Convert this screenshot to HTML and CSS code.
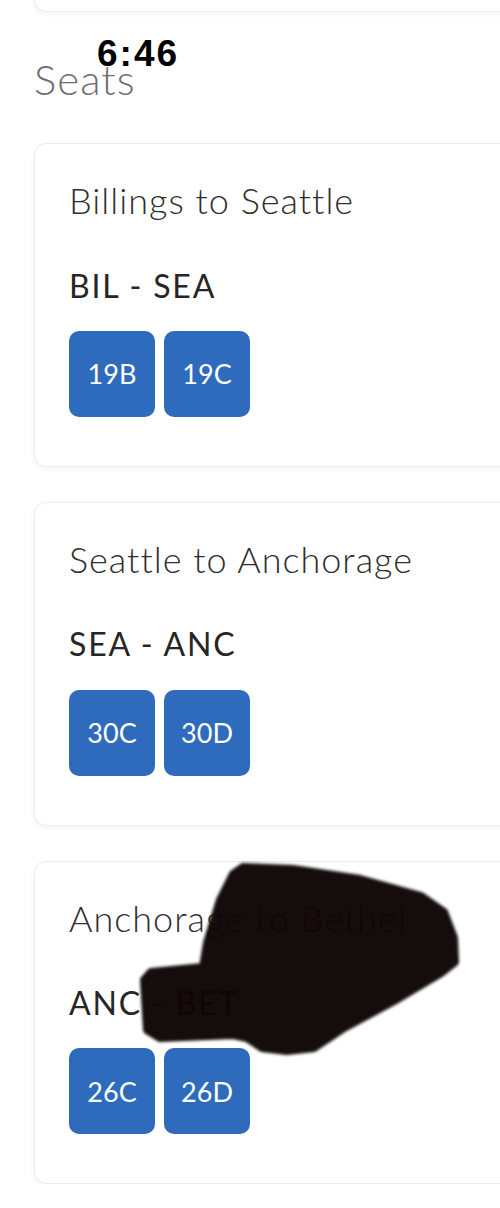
FILE: index.html
```html
<!DOCTYPE html>
<html lang="en">
<head>
<meta charset="utf-8">
<title>Seats</title>
<link rel="stylesheet" href="styles.css">
</head>
<body>
<div class="status-time">6:46</div>
<main class="page">
  <div class="card card-tail"></div>
  <h1 class="section-title">Seats</h1>
  <div class="card-list">
    <section class="card">
      <h2 class="leg-title">Billings to Seattle</h2>
      <p class="leg-code">BIL - SEA</p>
      <div class="seats">
        <button class="seat">19B</button>
        <button class="seat">19C</button>
      </div>
    </section>
    <section class="card">
      <h2 class="leg-title">Seattle to Anchorage</h2>
      <p class="leg-code">SEA - ANC</p>
      <div class="seats">
        <button class="seat">30C</button>
        <button class="seat">30D</button>
      </div>
    </section>
    <section class="card">
      <h2 class="leg-title">Anchorage to Bethel</h2>
      <p class="leg-code">ANC - BET</p>
      <div class="seats">
        <button class="seat">26C</button>
        <button class="seat">26D</button>
      </div>
    </section>
  </div>
</main>
<svg class="redaction" viewBox="0 0 500 1208" width="500" height="1208" aria-hidden="true">
  <path d="M243,867 L293,869 L360,879 L421,896 L444,912 L454,938 L455,962 L441,973 L394,1001 L344,1028 L314,1048 L287,1051 L262,1048 L247,1038 L233,1035 L160,1038 L147,1030 L144,980 L151,972 L203,967 L207,943 L220,900 L233,874 Z"/>
</svg>
</body>
</html>
```

FILE: styles.css
```css
html, body {
  margin: 0;
  padding: 0;
  background: #ffffff;
}

body {
  position: relative;
  overflow: hidden;
  font-family: Lato, "Open Sans", sans-serif;
}

.page {
  padding-left: 34px;
}

/* status bar clock, drawn over the page header */
.status-time {
  position: absolute;
  left: 97px;
  top: 32px;
  z-index: 2;
  font-family: "Liberation Sans", Arial, sans-serif;
  font-weight: 700;
  font-size: 37px;
  line-height: 44px;
  letter-spacing: 2px;
  color: #000;
}

.card {
  box-sizing: border-box;
  margin-right: -40px;
  background: #fff;
  border: 1px solid #ececec;
  border-radius: 12px;
  box-shadow: 0 2px 6px rgba(0, 0, 0, 0.05);
}

/* bottom edge of the card above, scrolled mostly out of view */
.card-tail {
  height: 12px;
  border-top: none;
  border-top-left-radius: 0;
  border-top-right-radius: 0;
}

.section-title {
  margin: 42px 0 39px;
  font-weight: 300;
  font-size: 42px;
  line-height: 1.2;
  letter-spacing: 1px;
  color: #6e6e6e;
}

.card-list {
  display: flex;
  flex-direction: column;
  gap: 35px;
}

.card-list .card {
  padding: 35px 34px 49px;
}

.leg-title {
  margin: 0;
  font-weight: 300;
  font-size: 36px;
  line-height: 1.2;
  letter-spacing: 1px;
  color: #2e2e2e;
}

.leg-code {
  margin: 44px 0 0;
  font-weight: 400;
  font-size: 32px;
  line-height: 1.2;
  letter-spacing: 1.8px;
  color: #262626;
}

.seats {
  display: flex;
  gap: 9px;
  margin-top: 26px;
}

.seat {
  width: 86px;
  height: 86px;
  padding: 0;
  border: none;
  border-radius: 10px;
  background: #2e6bbd;
  color: #fff;
  font-family: Lato, "Open Sans", sans-serif;
  font-size: 27px;
  font-weight: 400;
}

/* marker scribble laid over the last leg */
.redaction {
  position: absolute;
  left: 0;
  top: 0;
  z-index: 3;
  pointer-events: none;
}

.redaction path {
  fill: #0e0505;
  stroke: #0e0505;
  stroke-width: 8;
  stroke-linejoin: round;
  opacity: 0.97;
  filter: blur(1.5px);
}
```
